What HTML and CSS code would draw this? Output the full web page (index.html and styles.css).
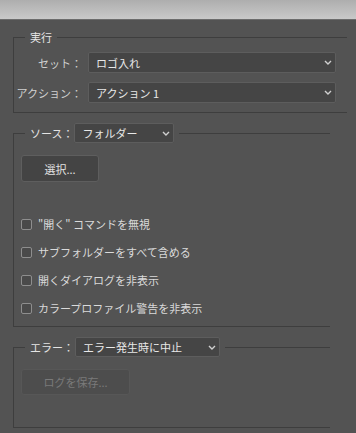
FILE: index.html
```html
<!DOCTYPE html>
<html lang="ja">
<head>
    <meta charset="UTF-8">
    <meta name="viewport" content="width=device-width, initial-scale=1.0">
    <title>バッチ</title>
    <link rel="stylesheet" href="styles.css">
</head>
<body>
    <div class="titlebar"></div>
    <div class="dialog">
        <fieldset class="group group-wide">
            <legend class="group-title">実行</legend>
            <div class="field-row">
                <span class="field-label">セット：</span>
                <div class="select">
                    <span>ロゴ入れ</span>
                    <svg class="chevron" width="8" height="5" viewBox="0 0 8 5"><path d="M1 1l3 3 3-3" fill="none" stroke="#d0d0d0" stroke-width="1.4"/></svg>
                </div>
            </div>
            <div class="field-row">
                <span class="field-label">アクション：</span>
                <div class="select">
                    <span>アクション 1</span>
                    <svg class="chevron" width="8" height="5" viewBox="0 0 8 5"><path d="M1 1l3 3 3-3" fill="none" stroke="#d0d0d0" stroke-width="1.4"/></svg>
                </div>
            </div>
        </fieldset>

        <fieldset class="group">
            <legend class="group-title">
                <div class="legend-field">
                    <span>ソース：</span>
                    <div class="select select-small select-source">
                        <span>フォルダー</span>
                        <svg class="chevron" width="8" height="5" viewBox="0 0 8 5"><path d="M1 1l3 3 3-3" fill="none" stroke="#d0d0d0" stroke-width="1.4"/></svg>
                    </div>
                </div>
            </legend>
            <button class="btn btn-choose">選択...</button>
            <ul class="checks">
                <li><span class="checkbox"></span>"開く" コマンドを無視</li>
                <li><span class="checkbox"></span>サブフォルダーをすべて含める</li>
                <li><span class="checkbox"></span>開くダイアログを非表示</li>
                <li><span class="checkbox"></span>カラープロファイル警告を非表示</li>
            </ul>
        </fieldset>

        <fieldset class="group group-error">
            <legend class="group-title">
                <div class="legend-field">
                    <span>エラー：</span>
                    <div class="select select-small select-error">
                        <span>エラー発生時に中止</span>
                        <svg class="chevron" width="8" height="5" viewBox="0 0 8 5"><path d="M1 1l3 3 3-3" fill="none" stroke="#d0d0d0" stroke-width="1.4"/></svg>
                    </div>
                </div>
            </legend>
            <button class="btn btn-log" disabled>ログを保存...</button>
        </fieldset>
    </div>
</body>
</html>
```

FILE: styles.css
```css
body {
    margin: 0;
    background: #535353;
    font-family: "Noto Sans CJK JP", "DejaVu Sans", sans-serif;
    font-size: 11px;
    color: #d8d8d8;
}
.titlebar {
    height: 19px;
    border-bottom: 1px solid #6c6c6c;
    background: linear-gradient(#aeaeae, #c9c9c9);
}
.dialog {
    padding: 9px 0 0 13px;
}
.group {
    box-sizing: border-box;
    width: 317px;
    min-width: 0;
    margin: 0 0 10px 0;
    padding: 12px 0 4px 7px;
    border: 1px solid #3e3e3e;
    border-right: none;
}
.group-wide {
    width: 334px;
    padding: 7px 11px 9px 0;
}
.group-error {
    padding-bottom: 32px;
}
.group-title {
    margin-left: 4px;
    padding: 0 5px;
    line-height: 16px;
    color: #e4e4e4;
}
.group-wide .group-title {
    margin-left: 11px;
}
.legend-field {
    display: flex;
    align-items: center;
    gap: 1px;
    height: 20px;
}
.field-row {
    display: grid;
    grid-template-columns: 68px 1fr;
    gap: 6px;
    align-items: center;
}
.field-row + .field-row {
    margin-top: 9px;
}
.field-label {
    text-align: right;
    color: #d0d0d0;
}
.select {
    box-sizing: border-box;
    height: 21px;
    display: flex;
    align-items: center;
    justify-content: space-between;
    padding: 0 3px 0 7px;
    background: #454545;
    border: 1px solid #5d5d5d;
    border-radius: 2px;
    color: #e8e8e8;
}
.select-small {
    height: 20px;
}
.select-source {
    width: 100px;
}
.select-error {
    width: 145px;
}
.chevron {
    display: block;
    flex: none;
}
.btn {
    display: block;
    box-sizing: border-box;
    height: 27px;
    padding: 0;
    background: #444444;
    border: 1px solid #5e5e5e;
    border-radius: 3px;
    font: inherit;
    color: #e2e2e2;
}
.btn-choose {
    width: 78px;
}
.btn-log {
    width: 109px;
    height: 26px;
    background: #4d4d4d;
    border-color: #575757;
    color: #7a7a7a;
}
.checks {
    list-style: none;
    margin: 28px 0 0 0;
    padding: 0;
}
.checks li {
    display: flex;
    align-items: center;
    gap: 6px;
    height: 28px;
    color: #dadada;
}
.checkbox {
    box-sizing: border-box;
    width: 11px;
    height: 11px;
    border: 1px solid #8e8e8e;
    border-radius: 2px;
    background: #4a4a4a;
}
```
